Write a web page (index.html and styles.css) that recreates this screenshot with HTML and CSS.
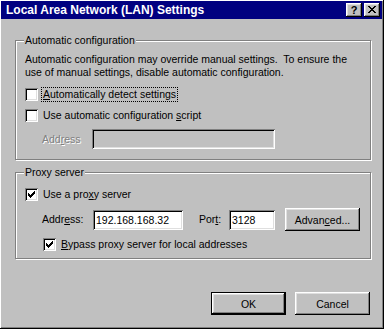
FILE: index.html
```html
<!DOCTYPE html>
<html lang="en">
<head>
    <meta charset="UTF-8">
    <meta name="viewport" content="width=device-width, initial-scale=1.0">
    <title>Local Area Network (LAN) Settings</title>
    <link rel="stylesheet" href="styles.css">
</head>
<body>
    <div class="window">
        <div class="titlebar">
            <span class="title">Local Area Network (LAN) Settings</span>
            <div class="title-buttons">
                <button class="tb tb-help">?</button>
                <button class="tb tb-close">
                    <svg width="8" height="7" viewBox="0 0 8 7" shape-rendering="crispEdges">
                        <path d="M0 0h2v1h1v1h2v-1h1v-1h2v1h-1v1h-1v1h-1v1h1v1h1v1h1v1h-2v-1h-1v-1h-2v1h-1v1h-2v-1h1v-1h1v-1h1v-1h-1v-1h-1v-1h-1z" fill="#000"/>
                    </svg>
                </button>
            </div>
        </div>

        <div class="dialog-body">
            <fieldset class="group group-auto">
                <legend>Automatic configuration</legend>
                <p class="note">Automatic configuration may override manual settings.&nbsp; To ensure the<br>use of manual settings, disable automatic configuration.</p>
                <label class="check check-first">
                    <span class="box"></span>
                    <span class="check-text focused"><u>A</u>utomatically detect settings</span>
                </label>
                <label class="check check-second">
                    <span class="box"></span>
                    <span class="check-text">Use automatic configuration <u>s</u>cript</span>
                </label>
                <div class="field-row script-row">
                    <span class="field-label disabled-label">Add<u>r</u>ess</span>
                    <input class="text-input script-input" type="text" disabled>
                </div>
            </fieldset>

            <fieldset class="group group-proxy">
                <legend>Proxy server</legend>
                <label class="check check-proxy">
                    <span class="box"><svg class="tick" width="7" height="7" viewBox="0 0 7 7" shape-rendering="crispEdges"><path d="M6 0h1v3h-1v1h-1v1h-1v1h-1v1h-1v-1h-1v-1h-1v-3h1v1h1v1h1v-1h1v-1h1v-1h1z" fill="#000"/></svg></span>
                    <span class="check-text">Use a pro<u>x</u>y server</span>
                </label>
                <div class="field-row proxy-row">
                    <span class="field-label addr-label">Addr<u>e</u>ss:</span>
                    <input class="text-input addr-input" type="text" value="192.168.168.32">
                    <span class="field-label port-label">Por<u>t</u>:</span>
                    <input class="text-input port-input" type="text" value="3128">
                    <button class="btn advanced">Advan<u>c</u>ed...</button>
                </div>
                <label class="check check-bypass">
                    <span class="box"><svg class="tick" width="7" height="7" viewBox="0 0 7 7" shape-rendering="crispEdges"><path d="M6 0h1v3h-1v1h-1v1h-1v1h-1v1h-1v-1h-1v-1h-1v-3h1v1h1v1h1v-1h1v-1h1v-1h1z" fill="#000"/></svg></span>
                    <span class="check-text"><u>B</u>ypass proxy server for local addresses</span>
                </label>
            </fieldset>

            <div class="actions">
                <button class="btn default">OK</button>
                <button class="btn">Cancel</button>
            </div>
        </div>
    </div>
</body>
</html>
```

FILE: styles.css
```css
body {
    margin: 0;
    padding: 0;
    background-color: #c0c0c0;
    font-family: "Liberation Sans", Arial, sans-serif;
    font-size: 10.5px;
    color: #000;
}
.window {
    width: 384px;
    height: 329px;
    box-sizing: border-box;
    padding: 1px 2px 2px 1px;
    background-color: #c0c0c0;
    box-shadow: inset -1px -1px 0 #000, inset 1px 1px 0 #fff, inset -2px -2px 0 #808080;
}
.titlebar {
    height: 18px;
    background-color: #000080;
    display: flex;
    align-items: center;
    justify-content: space-between;
    padding: 0 2px 0 5px;
}
.title {
    color: #fff;
    font-weight: bold;
    font-size: 12px;
    line-height: 14px;
}
.title-buttons {
    display: flex;
    gap: 2px;
}
.tb {
    width: 16px;
    height: 14px;
    padding: 0;
    border: none;
    background-color: #c0c0c0;
    box-shadow: inset -1px -1px 0 #000, inset 1px 1px 0 #fff, inset -2px -2px 0 #808080, inset 2px 2px 0 #dfdfdf;
    display: flex;
    align-items: center;
    justify-content: center;
    font-family: "Liberation Sans", Arial, sans-serif;
    font-weight: bold;
    font-size: 11px;
    line-height: 12px;
    color: #000;
}
.tb-help {
    padding-bottom: 1px;
}
.tb-close svg {
    display: block;
    margin-top: -1px;
}
.dialog-body {
    padding: 15px 11px 0 14px;
}
.group {
    margin: 0;
    border: 1px solid #808080;
    box-shadow: 1px 1px 0 #fff, inset 1px 1px 0 #fff;
    padding: 0 9px;
    min-width: 0;
}
.group legend {
    margin-left: -1px;
    padding: 0 1px;
    line-height: 13px;
    background-color: #c0c0c0;
}
.group-auto {
    padding-top: 6px;
    padding-bottom: 10px;
}
.group-proxy {
    margin-top: 6px;
    padding-top: 9px;
    padding-bottom: 7px;
}
.note {
    margin: 0;
    line-height: 13px;
    white-space: nowrap;
}
.check {
    display: flex;
    align-items: center;
    height: 13px;
    line-height: 13px;
}
.box {
    width: 13px;
    height: 13px;
    flex: none;
    box-sizing: border-box;
    background-color: #fff;
    box-shadow: inset 1px 1px 0 #808080, inset -1px -1px 0 #fff, inset 2px 2px 0 #000, inset -2px -2px 0 #dfdfdf;
    margin-right: 4px;
    display: flex;
    align-items: center;
    justify-content: center;
}
.tick {
    display: block;
}
.check-text {
    padding: 0 1px;
}
.focused {
    outline: 1px dotted #000;
    outline-offset: 0;
}
.check-first {
    margin-top: 9px;
}
.check-second {
    margin-top: 8px;
}
.field-row {
    display: flex;
    align-items: center;
}
.script-row {
    margin-top: 7px;
    padding-left: 17px;
}
.field-label {
    line-height: 13px;
}
.disabled-label {
    width: 50px;
    color: #808080;
    text-shadow: 1px 1px 0 #fff;
}
.text-input {
    -webkit-appearance: none;
    appearance: none;
    box-sizing: border-box;
    height: 20px;
    margin: 0;
    border: none;
    padding: 0 3px;
    font-family: "Liberation Sans", Arial, sans-serif;
    font-size: 10.5px;
    color: #000;
    background-color: #fff;
    box-shadow: inset 1px 1px 0 #808080, inset -1px -1px 0 #fff, inset 2px 2px 0 #000, inset -2px -2px 0 #dfdfdf;
    outline: none;
}
.script-input {
    width: 183px;
    background-color: #c0c0c0;
}
.check-proxy {
    margin-top: 0;
}
.proxy-row {
    margin-top: 7px;
    height: 23px;
    padding-left: 17px;
}
.addr-label {
    width: 51px;
}
.addr-input {
    width: 90px;
}
.port-label {
    margin-left: 16px;
    width: 30px;
}
.port-input {
    width: 46px;
}
.btn {
    width: 75px;
    height: 23px;
    padding: 0;
    border: none;
    background-color: #c0c0c0;
    box-shadow: inset -1px -1px 0 #000, inset 1px 1px 0 #fff, inset -2px -2px 0 #808080, inset 2px 2px 0 #dfdfdf;
    font-family: "Liberation Sans", Arial, sans-serif;
    font-size: 10.5px;
    color: #000;
}
.advanced {
    margin-left: 10px;
}
.check-bypass {
    margin-top: 7px;
    padding-left: 18px;
}
.actions {
    display: flex;
    justify-content: flex-end;
    gap: 9px;
    margin-top: 33px;
    padding-right: 1px;
}
.btn.default {
    box-shadow: inset 0 0 0 1px #000, inset -2px -2px 0 #000, inset 2px 2px 0 #fff, inset -3px -3px 0 #808080, inset 3px 3px 0 #dfdfdf;
}
```
